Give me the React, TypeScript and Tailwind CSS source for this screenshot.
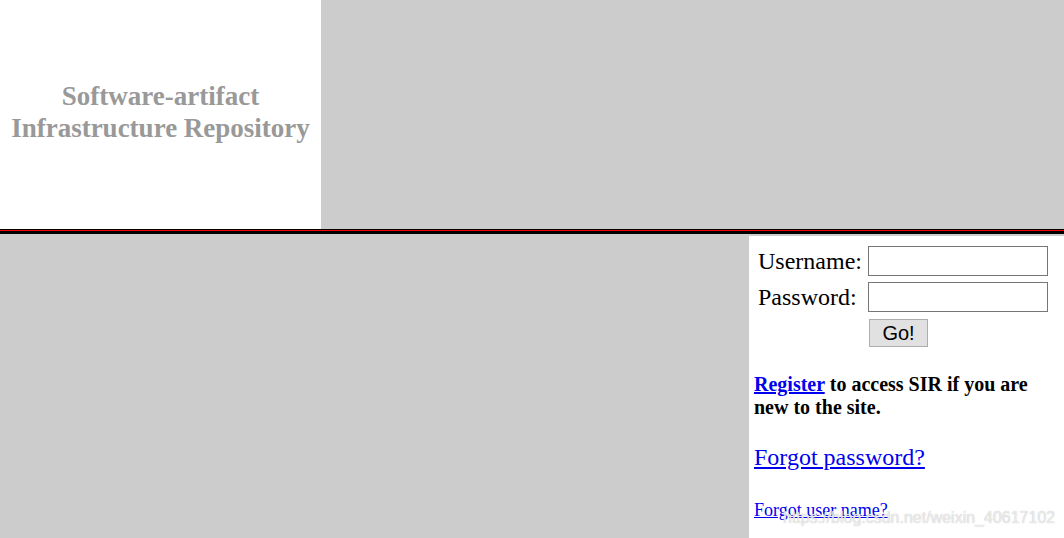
import React from "react";

export default function App() {
  const serif = { fontFamily: '"Liberation Serif", "Times New Roman", serif' };
  return (
    <div className="relative w-[1064px] h-[538px] overflow-hidden bg-[#cccccc]" style={serif}>
      <div className="flex h-[229px]">
        <div className="w-[321px] bg-white flex items-center justify-center text-center">
          <div className="text-[27px] leading-[32px] font-bold text-[#999999] mt-[-5px]">
            Software-artifact
            <br />
            Infrastructure Repository
          </div>
        </div>
        <div className="flex-1 bg-[#cccccc]" />
      </div>
      <div className="h-px bg-black" />
      <div className="h-px bg-[#ff0000]" />
      <div className="h-[3px] bg-black" />
      <div className="flex">
        <div className="w-[749px]" />
        <div className="flex-1 bg-white mt-[2px] h-[302px]">
          <div className="pl-[9px] pt-[10px]">
            <div className="flex items-center h-[30px]">
              <span className="w-[110px] text-[24px] leading-[30px] text-black">Username:</span>
              <div className="w-[180px] h-[30px] border border-[#767676] bg-white" />
            </div>
            <div className="flex items-center h-[30px] mt-[6px]">
              <span className="w-[110px] text-[24px] leading-[30px] text-black">Password:</span>
              <div className="w-[180px] h-[30px] border border-[#767676] bg-white" />
            </div>
            <div className="ml-[111px] mt-[7px] w-[59px] h-[28px] bg-[#e1e1e1] border border-[#adadad] flex items-center justify-center text-[20px] text-black" style={{ fontFamily: '"Liberation Sans", Arial, sans-serif' }}>
              Go!
            </div>
          </div>
          <div className="px-[5px] mt-[26px] text-[20px] leading-[23px] font-bold text-black">
            <span className="text-[#0000ee] underline">Register</span> to access SIR if you are new to the site.
          </div>
          <div className="px-[5px] mt-[24px] text-[24px] leading-[28px] text-[#0000ee] underline">Forgot password?</div>
          <div className="px-[5px] mt-[29px] text-[18px] leading-[20px] text-[#0000ee] underline">Forgot user name?</div>
        </div>
      </div>
      <div className="absolute left-[783px] top-[508px] text-[16px] leading-[20px] text-[#ffffff]/70 whitespace-nowrap [text-shadow:0_0_1px_#b0b0b0]" style={{ fontFamily: '"Liberation Sans", Arial, sans-serif' }}>
        https://blog.csdn.net/weixin_40617102
      </div>
    </div>
  );
}
